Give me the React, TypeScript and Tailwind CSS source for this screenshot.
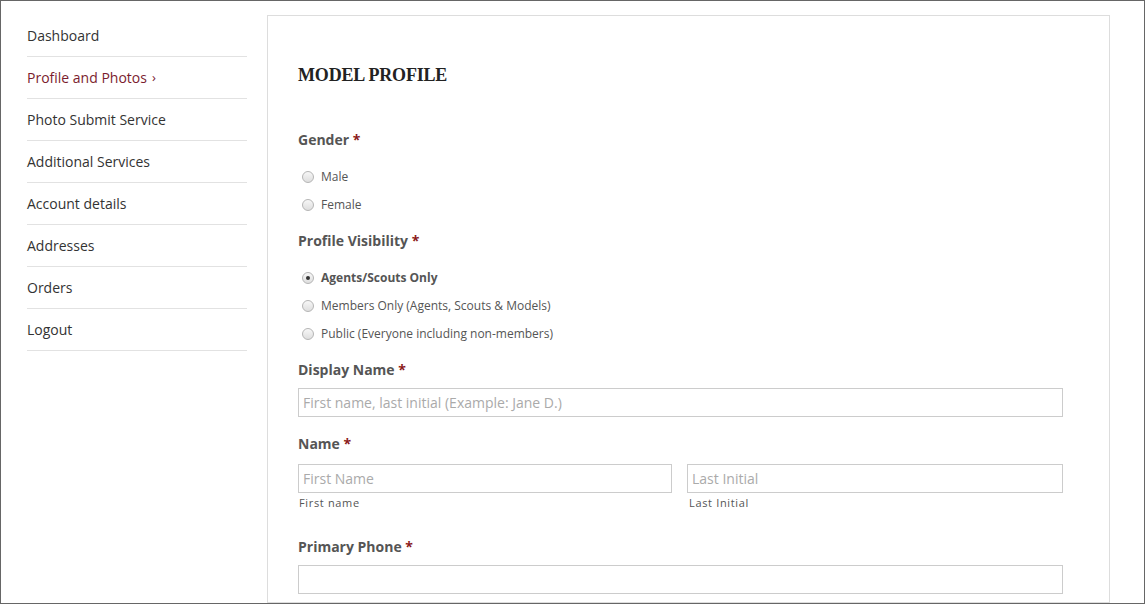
import React from 'react';

const navItems = [
    'Dashboard',
    'Profile and Photos',
    'Photo Submit Service',
    'Additional Services',
    'Account details',
    'Addresses',
    'Orders',
    'Logout',
];

const Radio: React.FC<{ label: string; checked?: boolean }> = ({ label, checked }) => (
    <label className="flex items-center h-[28px] pl-[4px]">
        <span className="w-[12px] h-[12px] rounded-full border border-[#b5b5b5] bg-gradient-to-b from-[#f7f7f7] to-[#dedede] flex items-center justify-center">
            {checked && <span className="w-[4px] h-[4px] rounded-full bg-[#333]"></span>}
        </span>
        <span className={`ml-[7px] text-[12px] text-[#555] ${checked ? 'font-bold' : ''}`}>{label}</span>
    </label>
);

const Label: React.FC<{ text: string; className?: string }> = ({ text, className }) => (
    <div className={`text-[14px] leading-[20px] font-bold text-[#555] ${className ?? ''}`}>
        {text} <span className="text-[#8b1a1a]">*</span>
    </div>
);

const App: React.FC = () => {
    return (
        <div
            className="w-[1145px] h-[604px] border border-[#666] overflow-hidden bg-white flex"
            style={{ fontFamily: '"Open Sans", sans-serif' }}
        >
            <aside className="w-[220px] ml-[26px] mt-[14px] shrink-0">
                {navItems.map((item, i) => (
                    <div
                        key={item}
                        className={`h-[42px] flex items-center border-b border-[#e2e2e2] text-[14px] ${i === 1 ? 'text-[#7b1c2e]' : 'text-[#333]'}`}
                    >
                        {item}
                        {i === 1 && <span className="ml-[5px] text-[13px]">›</span>}
                    </div>
                ))}
            </aside>

            <main className="ml-[20px] mt-[14px] w-[843px] shrink-0 border border-[#ddd] pl-[30px] pr-[46px] pt-[47px]">
                <h1
                    className="text-[18px] leading-[24px] font-bold text-[#222] tracking-[-0.01em]"
                    style={{ fontFamily: '"Liberation Serif", serif' }}
                >
                    MODEL PROFILE
                </h1>

                <Label text="Gender" className="mt-[43px]" />
                <div className="mt-[13px]">
                    <Radio label="Male" />
                    <Radio label="Female" />
                </div>

                <Label text="Profile Visibility" className="mt-[12px]" />
                <div className="mt-[13px]">
                    <Radio label="Agents/Scouts Only" checked />
                    <Radio label="Members Only (Agents, Scouts & Models)" />
                    <Radio label="Public (Everyone including non-members)" />
                </div>

                <Label text="Display Name" className="mt-[12px]" />
                <input
                    className="mt-[8px] w-full h-[29px] border border-[#ccc] px-[4px] text-[14px] placeholder:text-[#aaa] outline-none"
                    placeholder="First name, last initial (Example: Jane D.)"
                />

                <Label text="Name" className="mt-[17px]" />
                <div className="mt-[10px] grid grid-cols-[374px_1fr] gap-[15px]">
                    <div>
                        <input
                            className="w-full h-[29px] border border-[#ccc] px-[4px] text-[14px] placeholder:text-[#aaa] outline-none"
                            placeholder="First Name"
                        />
                        <div className="mt-[3px] pl-[1px] text-[11px] leading-[14px] tracking-[0.06em] text-[#555]">First name</div>
                    </div>
                    <div>
                        <input
                            className="w-full h-[29px] border border-[#ccc] px-[4px] text-[14px] placeholder:text-[#aaa] outline-none"
                            placeholder="Last Initial"
                        />
                        <div className="mt-[3px] pl-[2px] text-[11px] leading-[14px] tracking-[0.06em] text-[#555]">Last Initial</div>
                    </div>
                </div>

                <Label text="Primary Phone" className="mt-[27px]" />
                <input className="mt-[8px] w-full h-[29px] border border-[#ccc] px-[4px] text-[14px] outline-none" />
            </main>
        </div>
    );
};

export default App;
